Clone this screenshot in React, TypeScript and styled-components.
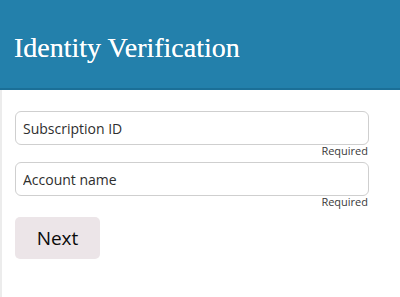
import React from "react";
import styled, { createGlobalStyle } from "styled-components";

const Global = createGlobalStyle`
  html, body { margin: 0; padding: 0; background: #ffffff; }
  body { width: 400px; height: 297px; overflow: hidden; }
`;

const Page = styled.div`
  display: flex;
  flex-direction: column;
  width: 400px;
  height: 297px;
  background: #ffffff;
`;

const Header = styled.header`
  height: 88px;
  background: #2380ab;
  border-top: 1px solid #3a8fb6;
  border-bottom: 2px solid #1b6f97;
  box-sizing: content-box;
  margin-top: -1px;
  padding: 0 14px;
`;

const Title = styled.h1`
  margin: 33px 0 0;
  font-family: "Liberation Serif", "DejaVu Serif", serif;
  font-weight: 400;
  font-size: 28px;
  line-height: 30px;
  color: #ffffff;
  text-shadow: 0 0 0.4px rgba(255, 255, 255, 0.8);
`;

const Content = styled.main`
  flex: 1;
  display: flex;
  flex-direction: column;
  padding: 21px 31px 0 13px;
  border-left: 2px solid #ececec;
  font-family: "Open Sans", "Liberation Sans", sans-serif;
`;

const Field = styled.div`
  display: flex;
  flex-direction: column;
  margin-bottom: 5px;
`;

const Input = styled.input`
  box-sizing: border-box;
  height: 34px;
  width: 100%;
  padding: 0 7px;
  border: 1px solid #cfcfcf;
  border-radius: 6px;
  background: #ffffff;
  font-family: "Open Sans", "Liberation Sans", sans-serif;
  font-size: 14px;
  color: #2e2e2e;
  outline: none;
  &::placeholder { color: #2e2e2e; opacity: 1; }
`;

const Hint = styled.span`
  align-self: flex-end;
  font-size: 11px;
  line-height: 12px;
  color: #3a3a3a;
  margin-right: 1px;
`;

const Button = styled.button`
  margin-top: 4px;
  align-self: flex-start;
  width: 85px;
  height: 42px;
  border: none;
  border-radius: 5px;
  background: #ece5e8;
  font-family: "Open Sans", "Liberation Sans", sans-serif;
  font-size: 19px;
  color: #0a0a0a;
  padding: 0;
`;

export default function App() {
  return (
    <Page>
      <Global />
      <Header>
        <Title>Identity Verification</Title>
      </Header>
      <Content>
        <Field>
          <Input placeholder="Subscription ID" />
          <Hint>Required</Hint>
        </Field>
        <Field>
          <Input placeholder="Account name" />
          <Hint>Required</Hint>
        </Field>
        <Button>Next</Button>
      </Content>
    </Page>
  );
}
